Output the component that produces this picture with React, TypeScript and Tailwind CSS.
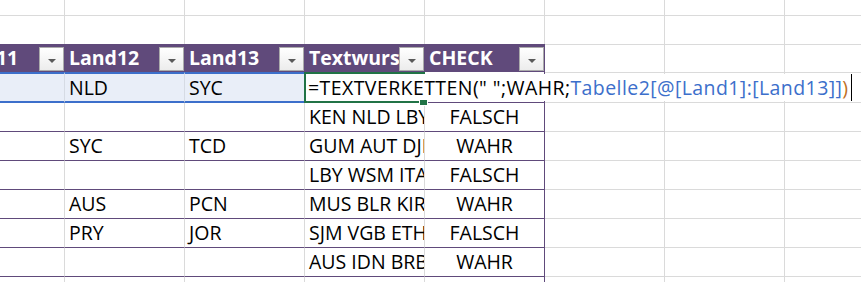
import React from 'react';

// widths of the visible columns (first one starts off-screen at -56px)
const colW = ['w-[121px]', 'w-[120px]', 'w-[120px]', 'w-[120px]', 'w-[120px]', 'w-[120px]', 'w-[120px]', 'w-[76px]'];

const headers = ['Land11', 'Land12', 'Land13', 'Textwurst', 'CHECK'];

const rows = [
  ['', '', '', 'KEN NLD LBY', 'FALSCH'],
  ['', 'SYC', 'TCD', 'GUM AUT DJI', 'WAHR'],
  ['', '', '', 'LBY WSM ITA', 'FALSCH'],
  ['', 'AUS', 'PCN', 'MUS BLR KIR', 'WAHR'],
  ['', 'PRY', 'JOR', 'SJM VGB ETH', 'FALSCH'],
  ['', '', '', 'AUS IDN BRB', 'WAHR'],
  ['', '', '', '', ''],
];

const FilterButton = () => (
  <div className="mt-[3px] self-start w-[25px] h-[24px] shrink-0 border border-[#ababab] bg-gradient-to-b from-white to-[#ececec] flex items-center justify-center">
    <div className="mt-[3px] w-0 h-0 border-x-[4px] border-x-transparent border-t-[4px] border-t-[#5a5a5a]" />
  </div>
);

// plain sheet row outside of the table
const BlankRow = ({ h, top }: { h: string; top?: boolean }) => (
  <div className={`flex ${h} ${top ? 'border-t border-[#dadada]' : ''}`}>
    {colW.map((w, i) => (
      <div key={i} className={`${w} shrink-0 ${i < 7 ? 'border-r border-[#dadada]' : ''}`} />
    ))}
  </div>
);

const HeaderRow = () => (
  <div className="flex h-[28px]">
    {headers.map((t) => (
      <div key={t} className="w-[120px] first:w-[121px] shrink-0 bg-[#604a7b] flex border-r border-[#604a7b]">
        <span className="flex-1 min-w-0 overflow-hidden whitespace-nowrap pl-[4px] text-white font-bold text-[19.5px] leading-[28px]">
          {t}
        </span>
        <FilterButton />
      </div>
    ))}
    {[5, 6, 7].map((i) => (
      <div key={i} className={`${colW[i]} shrink-0 border-t border-[#dadada] ${i < 7 ? 'border-r' : ''}`} />
    ))}
  </div>
);

const EditRow = () => (
  <div className="flex h-[31px]">
    {['', 'NLD', 'SYC'].map((t, i) => (
      <div
        key={i}
        className={`${colW[i]} shrink-0 bg-[#e9eef8] border-y-2 border-y-[#3c6fcb] border-r border-r-[#d6dbe4] pl-[4px] text-[19.5px] leading-[27px] text-black`}
      >
        {t}
      </div>
    ))}
    <div className={`${colW[3]} shrink-0 relative border-b border-[#dadada]`}>
      {/* in-cell formula editor, overflowing to the right */}
      <div className="absolute left-[-1px] top-0 w-[557px] h-[31px] z-10">
        <div className="absolute left-0 top-0 w-[121px] h-[31px] border-l-2 border-y-2 border-[#217346]" />
        <div className="absolute left-[2px] top-[2px] w-[555px] h-[27px] bg-white pl-[2px] flex items-center whitespace-nowrap text-[19.5px] leading-[27px] tracking-[0.42px] text-black">
          <span>=TEXTVERKETTEN(" ";WAHR;</span>
          <span className="text-[#3c6fcb]">Tabelle2[@[Land1]:[Land13]]</span>
          <span className="text-[#c0701e]">)</span>
          <span className="ml-[2px] w-px h-[27px] bg-black" />
        </div>
        <div className="absolute left-[115px] top-[27px] w-[9px] h-[7px] bg-[#217346] border border-white" />
      </div>
    </div>
    <div className={`${colW[4]} shrink-0 border-b border-r border-[#604a7b]`} />
    {[5, 6, 7].map((i) => (
      <div key={i} className={`${colW[i]} shrink-0 border-y border-[#dadada] ${i < 7 ? 'border-r' : ''}`} />
    ))}
  </div>
);

const DataRow = ({ cells, first }: { cells: string[]; first?: boolean }) => (
  <div className={`flex ${first ? 'h-[28px]' : 'h-[29px]'}`}>
    {cells.map((t, i) => (
      <div
        key={i}
        className={`${colW[i]} shrink-0 overflow-hidden whitespace-nowrap text-[19.5px] leading-[28px] text-black ${
          first ? '' : 'border-t border-t-[#604a7b]'
        } border-r ${i === 4 ? 'border-r-[#604a7b] text-center' : 'border-r-[#dadada] pl-[4px]'}`}
      >
        {t}
      </div>
    ))}
    {[5, 6, 7].map((i) => (
      <div
        key={i}
        className={`${colW[i]} shrink-0 ${first ? '' : 'border-t border-t-[#dadada]'} ${i < 7 ? 'border-r border-r-[#dadada]' : ''}`}
      />
    ))}
  </div>
);

export default function App() {
  return (
    <div
      className="w-[861px] h-[282px] overflow-hidden bg-white"
      style={{ fontFamily: '"Open Sans", "Liberation Sans", sans-serif' }}
    >
      <div className="-ml-[56px] w-[917px]">
        <BlankRow h="h-[15px]" />
        <BlankRow h="h-[29px]" top />
        <HeaderRow />
        <EditRow />
        {rows.map((r, i) => (
          <DataRow key={i} cells={r} first={i === 0} />
        ))}
      </div>
    </div>
  );
}
